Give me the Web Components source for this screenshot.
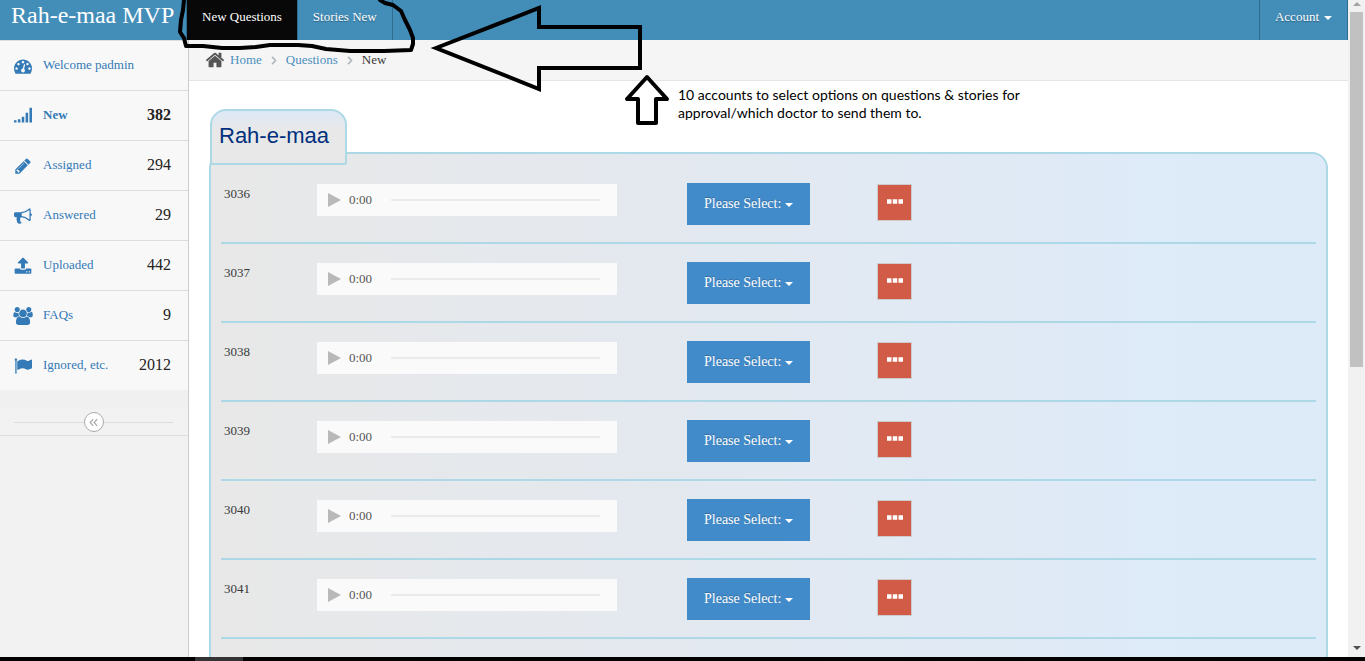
<!DOCTYPE html>
<html lang="en">
<head>
<meta charset="utf-8">
<title>Rah-e-maa MVP</title>
<style>
html, body { margin: 0; height: 100%; }
body { font: 13px/20px "Liberation Serif", "Times New Roman", serif; color: #393939; background: #fff; overflow: hidden; }
</style>
</head>
<body>
<admin-app></admin-app>

<script>
const ICONS = {
  dashboard: '<path d="M384 1152q0-53-37.5-90.5t-90.5-37.5-90.5 37.5-37.5 90.5 37.5 90.5 90.5 37.5 90.5-37.5 37.5-90.5zm192-448q0-53-37.5-90.5t-90.5-37.5-90.5 37.5-37.5 90.5 37.5 90.5 90.5 37.5 90.5-37.5 37.5-90.5zm428 481l101-382q6-26-7.5-48.5t-38.5-29.5-48 6.5-30 39.5l-101 382q-60 5-107 43.5t-63 98.5q-20 77 20 146t117 89 146-20 89-117q16-60-6-117t-72-91zm660-33q0-53-37.5-90.5t-90.5-37.5-90.5 37.5-37.5 90.5 37.5 90.5 90.5 37.5 90.5-37.5 37.5-90.5zm-640-640q0-53-37.5-90.5t-90.5-37.5-90.5 37.5-37.5 90.5 37.5 90.5 90.5 37.5 90.5-37.5 37.5-90.5zm448 192q0-53-37.5-90.5t-90.5-37.5-90.5 37.5-37.5 90.5 37.5 90.5 90.5 37.5 90.5-37.5 37.5-90.5zm320 448q0 261-141 483-19 29-54 29h-1402q-35 0-54-29-141-221-141-483 0-182 71-348t191-286 286-191 348-71 348 71 286 191 191 286 71 348z"/>',
  signal: '<path d="M0 1312h250v224h-250zM385 1210h250v326h-250zM770 960h250v576h-250zM1155 576h250v960h-250zM1540 64h250v1472h-250z"/>',
  pencil: '<path d="M491 1536l91-91-235-235-91 91v107h128v128h107zm523-928q0-22-22-22-10 0-17 7l-542 542q-7 7-7 17 0 22 22 22 10 0 17-7l542-542q7-7 7-17zm-54-192l416 416-832 832h-416v-416zm683 96q0 53-37 90l-166 166-416-416 166-165q36-38 90-38 53 0 91 38l235 234q37 39 37 91z"/>',
  bullhorn: '<path d="M1664 640q53 0 90.5 37.5t37.5 90.5-37.5 90.5-90.5 37.5v384q0 52-38 90t-90 38q-417-347-812-380-58 19-91 66t-31 100.5 40 92.5q-20 33-23 65.5t6 58 33.5 55 48 50 61.5 50.5q-29 58-111.5 83t-168.5 11.5-132-55.5q-7-23-29.5-87.5t-32-94.5-23-89-15-101 3.5-98.5 22-110.5h-122q-66 0-113-47t-47-113v-192q0-66 47-113t113-47h480q435 0 896-384 52 0 90 38t38 90v384zm-128 604v-954q-394 302-768 343v270q377 42 768 341z"/>',
  upload: '<path d="M1344 1472q0-26-19-45t-45-19-45 19-19 45 19 45 45 19 45-19 19-45zm256 0q0-26-19-45t-45-19-45 19-19 45 19 45 45 19 45-19 19-45zm128-224v320q0 40-28 68t-68 28h-1472q-40 0-68-28t-28-68v-320q0-40 28-68t68-28h427q21 56 70.5 92t110.5 36h256q61 0 110.5-36t70.5-92h427q40 0 68 28t28 68zm-325-648q-17 40-59 40h-256v448q0 26-19 45t-45 19h-256q-26 0-45-19t-19-45v-448h-256q-42 0-59-40-17-39 14-69l448-448q18-19 45-19t45 19l448 448q31 30 14 69z"/>',
  users: '<path transform="translate(-64)" d="M593 896q-162 5-265 128h-134q-82 0-138-40.5t-56-118.5q0-353 124-353 6 0 43.5 21t97.5 42.5 119 21.5q67 0 133-23-5 37-5 66 0 159 93 293zm1071 637q0 120-73 189.5t-194 69.5h-874q-121 0-194-69.5t-73-189.5q0-53 3.5-103.5t14-109 26.5-108.5 43-97.5 62-81 85.5-53.5 111.5-20q10 0 43 21.5t73 48 107 48 135 21.5 135-21.5 107-48 73-48 43-21.5q61 0 111.5 20t85.5 53.5 62 81 43 97.5 26.5 108.5 14 109 3.5 103.5zm-1024-1277q0 106-75 181t-181 75-181-75-75-181 75-181 181-75 181 75 75 181zm704 384q0 159-112.5 271.5t-271.5 112.5-271.5-112.5-112.5-271.5 112.5-271.5 271.5-112.5 271.5 112.5 112.5 271.5zm576 225q0 78-56 118.5t-138 40.5h-134q-103-123-265-128 93-134 93-293 0-29-5-66 66 23 133 23 59 0 119-21.5t97.5-42.5 43.5-21q124 0 124 353zm-128-609q0 106-75 181t-181 75-181-75-75-181 75-181 181-75 181 75 75 181z"/>',
  flag: '<path d="M320 256q0 72-64 110v1266q0 13-9.5 22.5t-22.5 9.5h-64q-13 0-22.5-9.5t-9.5-22.5v-1266q-64-38-64-110 0-53 37.5-90.5t90.5-37.5 90.5 37.5 37.5 90.5zm1472 64v763q0 25-12.5 38.5t-39.5 27.5q-215 116-369 116-61 0-123.5-22t-108.5-48-115.5-48-142.5-22q-192 0-464 146-17 9-33 9-26 0-45-19t-19-45v-742q0-32 31-55 21-14 79-43 236-120 421-120 107 0 200 29t219 88q38 19 88 19 54 0 117.5-21t110-47 88-47 54.5-21q26 0 45 19t19 45z"/>',
  home: '<path d="M1472 992v480q0 26-19 45t-45 19h-384v-384h-256v384h-384q-26 0-45-19t-19-45v-480q0-1 .5-3t.5-3l575-474 575 474q1 2 1 6zm223-69l-62 74q-8 9-21 11h-3q-13 0-21-7l-692-577-692 577q-12 8-24 7-13-2-21-11l-62-74q-8-10-7-23.5t11-21.5l719-599q32-26 76-26t76 26l244 204v-195q0-14 9-23t23-9h192q14 0 23 9t9 23v408l219 182q10 8 11 21.5t-7 23.5z"/>',
  chevron: '<path d="M500 300l560 596-560 596" fill="none" stroke="currentColor" stroke-width="270"/>',
  collapse: '<path d="M850 350l-500 546 500 546M1500 350l-500 546 500 546" fill="none" stroke="currentColor" stroke-width="200"/>',
  caret: '<path d="M0 448h1792l-896 896z"/>',
  dots: '<path d="M0 600h500v500h-500zM646 600h500v500h-500zM1292 600h500v500h-500z"/>'
};

function define(name, html, setup) {
  const template = document.createElement('template');
  template.innerHTML = html;
  customElements.define(name, class extends HTMLElement {
    constructor() {
      super();
      this.attachShadow({ mode: 'open' }).append(template.content.cloneNode(true));
    }
    connectedCallback() { if (setup) setup(this, this.shadowRoot); }
  });
}

define('app-icon', `
<style>
:host { display: inline-block; flex: none; width: 18px; height: 18px; }
svg { display: block; width: 100%; height: 100%; overflow: visible; fill: currentColor; }
</style>
<svg viewBox="0 0 1792 1792" aria-hidden="true"></svg>`,
(host, root) => { root.querySelector('svg').innerHTML = ICONS[host.getAttribute('name')]; });

define('top-bar', `
<style>
:host { display: flex; flex: none; height: 40px; background: #438eb9; color: #fff; overflow: hidden; }
a, button { color: #fff; text-decoration: none; }
.brand { flex: none; box-sizing: border-box; width: 186px; padding-left: 11px; font-size: 24px; line-height: 30px; white-space: nowrap; }
nav { display: flex; flex: 1; border-left: 1px solid #2e6c91; }
nav a, button { font: 13px/34px "Liberation Serif", serif; text-shadow: 0 1px 1px rgba(0,0,0,.35); padding: 0 15px; border: 0 solid #2e6c91; white-space: nowrap; }
nav a { border-right-width: 1px; }
nav a[aria-current] { background: #080808; }
button { display: flex; gap: 5px; align-items: flex-start; background: none; border-width: 0 1px; }
app-icon { width: 8px; height: 8px; margin-top: 14px; }
</style>
<a class="brand" href="#">Rah-e-maa MVP</a>
<nav><a href="#new" aria-current="page">New Questions</a><a href="#stories">Stories New</a></nav>
<button type="button" aria-haspopup="menu">Account <app-icon name="caret"></app-icon></button>`);

define('side-item', `
<style>
:host { display: block; border-bottom: 1px solid #ddd; background: #f8f8f8; }
:host(:last-of-type) { border-bottom: 0; }
a { display: flex; align-items: center; gap: 11px; box-sizing: border-box; height: 49px; padding: 0 17px 2px 14px; color: #337ab7; text-decoration: none; }
app-icon { margin-top: 3px; }
span { flex: 1; }
b { font-weight: normal; font-size: 16px; color: #222; }
:host([active]) a, :host([active]) b { font-weight: bold; }
</style>
<a href="#"><span><slot></slot></span><b></b></a>`,
(host, root) => {
  const icon = document.createElement('app-icon');
  icon.setAttribute('name', host.getAttribute('icon'));
  root.querySelector('a').prepend(icon);
  const b = root.querySelector('b');
  if (host.hasAttribute('count')) b.textContent = host.getAttribute('count'); else b.remove();
});

define('side-bar', `
<style>
:host { display: block; flex: none; box-sizing: border-box; width: 189px; background: #f2f2f2; border-right: 1px solid #ccc; }
nav { border-top: 1px solid #ddd; }
.toggle { display: flex; align-items: center; height: 26px; padding: 19px 15px 0 14px; border-bottom: 1px solid #ddd; background: linear-gradient(#f0f0f0 19px, #f2f2f2 19px); }
.toggle::before, .toggle::after { content: ""; flex: 1; height: 1px; background: #ddd; }
button { box-sizing: border-box; width: 20px; height: 20px; padding: 0; border: 1px solid #aaa; border-radius: 50%; background: #fff; color: #aaa; display: grid; place-items: center; }
app-icon { width: 11px; height: 11px; }
</style>
<nav>
<side-item icon="dashboard">Welcome padmin</side-item>
<side-item icon="signal" count="382" active>New</side-item>
<side-item icon="pencil" count="294">Assigned</side-item>
<side-item icon="bullhorn" count="29">Answered</side-item>
<side-item icon="upload" count="442">Uploaded</side-item>
<side-item icon="users" count="9">FAQs</side-item>
<side-item icon="flag" count="2012">Ignored, etc.</side-item>
</nav>
<div class="toggle"><button type="button" aria-label="Collapse sidebar"><app-icon name="collapse"></app-icon></button></div>`);

define('bread-crumbs', `
<style>
:host { display: block; background: #f5f5f5; border-bottom: 1px solid #e5e5e5; }
ol { display: flex; align-items: center; height: 40px; margin: 0; padding: 0 16px; list-style: none; }
li { display: flex; align-items: center; }
a { color: #4c8fbd; text-decoration: none; }
.home { width: 20px; height: 20px; margin-right: 5px; color: #555; }
.sep { width: 11px; height: 11px; margin: 0 6px 0 7px; color: #b2b6bf; }
</style>
<ol>
<li><app-icon class="home" name="home"></app-icon><a href="#">Home</a><app-icon class="sep" name="chevron"></app-icon></li>
<li><a href="#questions">Questions</a><app-icon class="sep" name="chevron"></app-icon></li>
<li aria-current="page">New</li>
</ol>`);

define('audio-bar', `
<style>
:host { display: flex; align-items: center; box-sizing: border-box; width: 300px; height: 32px; padding: 0 17px 0 11px; background: #fafafa; color: #555; }
button { width: 13px; height: 14px; padding: 0; border: 0; background: #b9b9b9; clip-path: polygon(0 0, 100% 50%, 0 100%); }
time { width: 42px; margin-left: 8px; }
div { flex: 1; height: 2px; background: #ebebeb; }
</style>
<button type="button" aria-label="Play"></button><time>0:00</time><div></div>`);

define('option-picker', `
<style>
:host { display: block; }
label { display: grid; width: 123px; height: 42px; background: #428bca; color: #fff; align-items: center; }
select { grid-area: 1 / 1; width: 100%; height: 100%; margin: 0; padding: 0 17px; appearance: none; border: 0; background: none; color: #fff; font: 14px/20px "Liberation Serif", serif; text-shadow: 0 -1px 0 rgba(0,0,0,.25); }
app-icon { grid-area: 1 / 1; justify-self: end; width: 8px; height: 8px; margin: 1px 17px 0 0; pointer-events: none; }
</style>
<label><select aria-label="Please Select"><option>Please Select:</option></select><app-icon name="caret"></app-icon></label>`);

define('more-button', `
<style>
:host { display: block; }
button { display: grid; justify-items: center; align-items: start; box-sizing: border-box; width: 35px; height: 37px; padding: 9px 0 0; border: 1px solid #ccc; background: #d15b47; color: #fff; }
app-icon { width: 16px; height: 16px; }
</style>
<button type="button" aria-label="More actions"><app-icon name="dots"></app-icon></button>`);

define('question-table', `
<style>
:host { display: block; }
table { width: 100%; table-layout: fixed; border-collapse: separate; border-spacing: 0; }
col.id { width: 93px; } col.audio { width: 370px; } col.pick { width: 190px; }
td { box-sizing: border-box; height: 79px; padding: 18px 3px 0; vertical-align: top; border-bottom: 2px solid #add8e6; }
td:first-child { line-height: 22px; }
audio-bar, more-button { margin-top: 1px; }
</style>
<table aria-label="New questions"><colgroup><col class="id"><col class="audio"><col class="pick"><col></colgroup><tbody></tbody></table>`,
(host, root) => {
  const body = root.querySelector('tbody');
  const cells = ['audio-bar', 'option-picker', 'more-button'];
  for (let id = 3036; id <= 3041; id++) {
    const row = body.insertRow();
    row.insertCell().textContent = id;
    for (const name of cells) row.insertCell().append(document.createElement(name));
  }
});

define('titled-panel', `
<style>
:host { display: block; }
h1 { position: relative; box-sizing: border-box; width: fit-content; height: 56px; margin: 0 0 0 1px; padding: 0 16px 0 7px; border: 2px solid #add8e6; border-radius: 16px 16px 3px 3px; background: linear-gradient(#dde9f6, #e8e8e8 20px); color: #002f7d; font: 22px/50px "Liberation Sans", Arial, sans-serif; }
section { margin-top: -13px; padding: 11px 10px 40px; border: 2px solid #add8e6; border-radius: 16px; background: linear-gradient(to right, #e8e8e8, #e2e9f2 55%, #ddebf9 90%); }
</style>
<h1><slot name="title"></slot></h1>
<section><slot></slot></section>`);

define('window-scrollbar', `
<style>
:host { display: flex; flex-direction: column; align-items: center; flex: none; box-sizing: border-box; width: 17px; padding: 2px 0 7px; background: #f1f1f1; }
i { border: 4px solid transparent; border-top: 0; border-bottom-color: #a3a3a3; }
i.down { border: 4px solid transparent; border-bottom: 0; border-top-color: #505050; }
div { flex: 1; width: 13px; padding-top: 6px; }
div::before { content: ""; display: block; height: 56%; background: #c1c1c1; }
</style>
<i></i><div></div><i class="down"></i>`);

define('sketch-notes', `
<style>
:host { position: absolute; inset: 0; overflow: hidden; pointer-events: none; color: #000; }
svg { position: absolute; top: 0; left: 0; fill: none; stroke: #000; stroke-width: 4; stroke-linejoin: round; stroke-linecap: round; }
p { position: absolute; left: 678px; top: 86px; width: 360px; margin: 0; font: 14px/18px Lato, "Open Sans", sans-serif; }
</style>
<svg width="700" height="130" aria-hidden="true">
<path d="M184 0L183 10L181 20L180 32L184 38L186 46L203 46L222 48L240 48L256 47L270 45L298 45L312 46L326 49L350 51L384 51L411 50L413 44L413 38L410 30L405 20L401 11L393 5L385 3L380 0"/>
<path stroke-linejoin="miter" d="M436 48L539 8V27H640V68H539V89Z"/>
<path d="M647 77L667 99H656V123H638V99H627Z"/>
</svg>
<p>10 accounts to select options on questions &amp; stories for<br>approval/which doctor to send them to.</p>`);

define('task-strip', `
<style>
:host { display: block; flex: none; height: 4px; background: #000; position: relative; }
div { width: 48px; height: 4px; margin-left: 195px; background: #333; }
</style>
<div></div>`);

define('admin-app', `
<style>
:host { display: flex; flex-direction: column; height: 100vh; position: relative; overflow: hidden; }
.window { display: flex; flex: 1; min-height: 0; }
.page { display: flex; flex-direction: column; flex: 1; min-width: 0; }
.body { display: flex; flex: 1; min-height: 0; }
main { flex: 1; min-width: 0; overflow: hidden; }
titled-panel { margin: 28px 20px; }
</style>
<div class="window">
<div class="page">
<top-bar></top-bar>
<div class="body">
<side-bar></side-bar>
<main>
<bread-crumbs></bread-crumbs>
<titled-panel><span slot="title">Rah-e-maa</span><question-table></question-table></titled-panel>
</main>
</div>
</div>
<window-scrollbar></window-scrollbar>
</div>
<task-strip></task-strip>
<sketch-notes></sketch-notes>`);
</script>
</body>
</html>
